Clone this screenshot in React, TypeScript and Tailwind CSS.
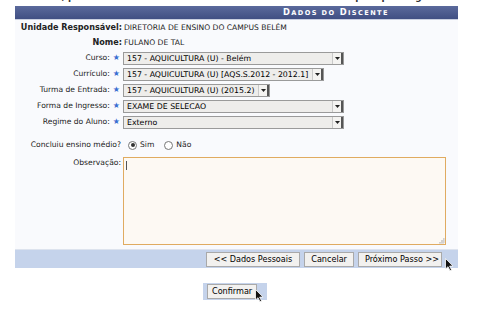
import React from 'react';

const font = { fontFamily: '"DejaVu Sans", Verdana, sans-serif' };

const Star = () => <span className="text-[#3b6fd1] text-[8px] mx-[3px] leading-none">★</span>;

const Select = ({ value, width }: { value: string; width?: number }) => (
  <div
    className="h-[13px] inline-flex items-center border border-[#9a9a9a] bg-[#eeedeb] text-[7.8px] text-black"
    style={width ? { width } : undefined}
  >
    <span className="flex-1 pl-[3px] pr-[4px] whitespace-nowrap leading-[11px]">{value}</span>
    <span className="w-[11px] h-full flex items-center justify-center border-l border-[#c9c9c9] bg-[#f4f3f1] border-r-2 border-r-[#555]">
      <svg width="5" height="3" viewBox="0 0 5 3"><path d="M0 0h5L2.5 3z" fill="#222" /></svg>
    </span>
  </div>
);

const Button = ({ children, className = 'px-[6px]' }: { children: React.ReactNode; className?: string }) => (
  <button className={`h-[15px] bg-[#f2f1ef] border border-[#a9a9a9] text-[8.1px] text-black leading-none ${className}`}>
    {children}
  </button>
);

const Cursor = () => (
  <svg width="9" height="13" viewBox="0 0 9 13" className="absolute">
    <path d="M0.5 0.5v10.5l2.5-2.3 2 4 1.6-0.8-2-3.8h3.4z" fill="#111" stroke="#fff" strokeWidth="0.8" />
  </svg>
);

const fields = [
  { label: 'Curso:', value: '157 - AQUICULTURA (U) - Belém', width: 221 },
  { label: 'Currículo:', value: '157 - AQUICULTURA (U) [AQS.S.2012 - 2012.1]' },
  { label: 'Turma de Entrada:', value: '157 - AQUICULTURA (U) (2015.2)' },
  { label: 'Forma de Ingresso:', value: 'EXAME DE SELECAO', width: 221 },
  { label: 'Regime do Aluno:', value: 'Externo', width: 221 },
];

export default function App() {
  return (
    <div className="w-[487px] h-[312px] bg-white overflow-hidden text-[#222]" style={font}>
      <div className="h-[3px] overflow-hidden">
        <p className="text-[9px] font-bold leading-[9px] -mt-[7px] pl-[16px] text-[#333]">
          Por favor, preencha o formulário abaixo com os dados do discente para prosseguir.
        </p>
      </div>

      <div className="ml-[15px] w-[443px] mt-[3px]">
        <div className="h-[14px] bg-gradient-to-b from-[#5b6a9c] to-[#404f83] border-b border-[#c9cfe0] flex items-center pl-[268px]">
          <span className="text-white text-[8.3px] font-bold tracking-[1.4px] leading-none">
            D<span className="text-[6.6px]">ADOS DO</span> D<span className="text-[6.6px]">ISCENTE</span>
          </span>
        </div>

        <div className="bg-[#f9fafd] pb-[4px]">
          <div className="grid grid-cols-[108px_1fr] items-center text-[7.6px]">
            <div className="h-[15px] flex items-center justify-end font-bold text-[8.1px] pr-[1px] whitespace-nowrap">Unidade Responsável:</div>
            <div className="h-[15px] flex items-center pl-[1px]">DIRETORIA DE ENSINO DO CAMPUS BELÉM</div>

            <div className="h-[15px] flex items-center justify-end font-bold text-[8.1px] pr-[1px]">Nome:</div>
            <div className="h-[15px] flex items-center pl-[1px]">FULANO DE TAL</div>

            {fields.map(f => (
              <React.Fragment key={f.label}>
                <div className="h-[16px] flex items-center justify-end">
                  {f.label}
                  <Star />
                </div>
                <div className="h-[16px] flex items-center">
                  <Select value={f.value} width={f.width} />
                </div>
              </React.Fragment>
            ))}

            <div className="h-[24px] flex items-center justify-end pr-[2px] pt-[6px]">Concluiu ensino médio?</div>
            <div className="h-[24px] flex items-center gap-[3px] pl-[5px] pt-[6px]">
              <span className="w-[9px] h-[9px] rounded-full border border-[#777] bg-white flex items-center justify-center">
                <span className="w-[4px] h-[4px] rounded-full bg-[#333]" />
              </span>
              <span className="mr-[7px]">Sim</span>
              <span className="w-[9px] h-[9px] rounded-full border border-[#777] bg-white" />
              <span>Não</span>
            </div>

            <div className="self-start flex justify-end pr-[2px] pt-[3px]">Observação:</div>
            <div className="pt-[3px]">
              <div className="relative w-[323px] h-[88px] border border-[#e0ab60] bg-[#fdf9f3]">
                <span className="absolute left-[2px] top-[3px] w-px h-[9px] bg-[#555]" />
                <svg width="7" height="7" viewBox="0 0 7 7" className="absolute right-0 bottom-0">
                  <path d="M6 1v5M4 3v3M2 5v1M1 6h5M3 4h3M5 2h1" stroke="#bbb" strokeWidth="0.8" />
                </svg>
              </div>
            </div>
          </div>
        </div>

        <div className="relative h-[19px] bg-[#c5d3eb] border-t border-[#dde3ee] flex items-center justify-end gap-[4px] pr-[16px]">
          <Button className="px-[7px]">&lt;&lt; Dados Pessoais</Button>
          <Button>Cancelar</Button>
          <Button className="pl-[6px] pr-[2px]">Próximo Passo &gt;&gt;</Button>
          <div className="absolute left-[430px] top-[8px]"><Cursor /></div>
        </div>
      </div>

      <div className="flex mt-[15px] ml-[203px]">
        <div className="relative bg-[#c5d3eb] pl-[4px] pr-[10px] py-[1px] flex">
          <Button className="px-[4px]">Confirmar</Button>
          <div className="absolute left-[52px] top-[6px]"><Cursor /></div>
        </div>
      </div>
    </div>
  );
}
